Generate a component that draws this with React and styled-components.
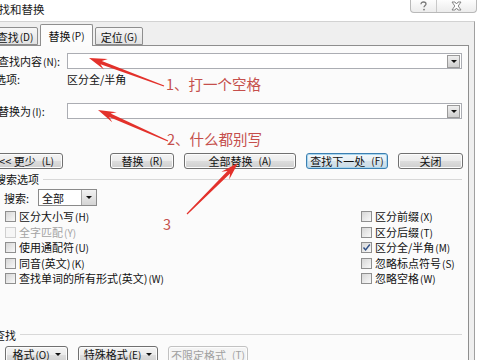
import React from "react";
import styled, { createGlobalStyle } from "styled-components";

const GlobalStyle = createGlobalStyle`
  * { box-sizing: border-box; }
  body { margin: 0; background: #fff; }
`;

const Screen = styled.div`
  position: relative;
  width: 480px;
  height: 360px;
  overflow: hidden;
  background: #fff;
  font-family: "Noto Sans CJK SC", "Noto Sans", sans-serif;
  font-size: 11px;
  line-height: 14px;
  color: #111;
  display: flex;
  flex-direction: column;
`;

const TitleBar = styled.div`
  height: 21px;
  flex-shrink: 0;
  display: flex;
  justify-content: space-between;
  align-items: flex-start;
`;

const Title = styled.div`
  margin-left: -13px;
  margin-top: 2px;
  font-size: 11.5px;
  color: #222;
`;

const CaptionGroup = styled.div`
  display: flex;
  margin-right: 3px;
  height: 13px;
  border: 1px solid #b9b9b9;
  border-top: none;
  border-radius: 0 0 4px 4px;
  background: linear-gradient(#fdfdfd, #ececec);
`;

const CaptionButton = styled.div`
  width: ${p => p.$w}px;
  display: flex;
  align-items: center;
  justify-content: center;
  & + & {
    border-left: 1px solid #c9c9c9;
  }
`;

const Dialog = styled.div`
  flex: 1;
  margin-left: -12px;
  width: 487px;
  background: #efefef;
  border-top: 1px solid #d2d2d2;
  border-right: 1px solid #a0a0a0;
  display: flex;
  flex-direction: column;
  min-height: 0;
`;

const TabStrip = styled.div`
  height: 23px;
  flex-shrink: 0;
  display: flex;
  align-items: flex-end;
  padding-left: 4px;
  gap: 2px;
`;

const Tab = styled.div`
  width: ${p => p.$w}px;
  height: ${p => (p.$active ? 22 : 18)}px;
  margin-bottom: ${p => (p.$active ? -1 : 0)}px;
  border: 1px solid #8e8e8e;
  border-bottom: ${p => (p.$active ? "none" : "1px solid #8e8e8e")};
  border-radius: 2px 2px 0 0;
  background: ${p =>
    p.$active ? "#fcfcfc" : "linear-gradient(#f7f7f7, #e2e2e2)"};
  display: flex;
  align-items: center;
  justify-content: center;
  padding-top: ${p => (p.$active ? 0 : 1)}px;
  position: relative;
  z-index: ${p => (p.$active ? 1 : 0)};
`;

const Panel = styled.div`
  flex: 1;
  margin-right: 5px;
  background: #fbfbfb;
  border-top: 1px solid #8e8e8e;
  border-right: 1px solid #8e8e8e;
  padding: 7px 6px 0 10px;
  display: flex;
  flex-direction: column;
`;

const FieldRow = styled.div`
  display: flex;
  align-items: center;
  margin-top: ${p => p.$mt || 0}px;
  min-height: 16px;
`;

const FieldLabel = styled.div`
  width: 69px;
  flex-shrink: 0;
  margin-left: ${p => p.$ml || 0}px;
`;

const FieldValue = styled.span`
  margin-left: 3px;
`;

const ComboBox = styled.div`
  flex: 1;
  height: 16px;
  border: 1px solid #abadb3;
  background: #fff;
  display: flex;
  justify-content: flex-end;
  align-items: center;
  padding-right: 1px;
`;

const DropButton = styled.div`
  width: 13px;
  height: 13px;
  border: 1px solid #9a9a9a;
  background: linear-gradient(#efefef, #cfcfcf);
  display: flex;
  align-items: center;
  justify-content: center;
`;

const Caret = styled.span`
  width: 0;
  height: 0;
  border-left: 3px solid transparent;
  border-right: 3px solid transparent;
  border-top: 3px solid #111;
`;

const ButtonRow = styled.div`
  display: flex;
  margin-top: ${p => p.$mt || 0}px;
`;

const Button = styled.div`
  width: ${p => p.$w}px;
  height: ${p => p.$h || 16}px;
  margin-left: ${p => p.$ml || 0}px;
  flex-shrink: 0;
  border: 1px solid ${p => (p.$focus ? "#3c7fb1" : p.$disabled ? "#c2c2c2" : "#707070")};
  border-radius: 3px;
  background: ${p =>
    p.$disabled
      ? "#f4f4f4"
      : p.$focus
      ? "linear-gradient(#f3f8fb 0%, #e6eff5 50%, #d6e3ec 51%, #cbdbe6 100%)"
      : "linear-gradient(#f4f4f4 0%, #ebebeb 50%, #dddddd 51%, #cfcfcf 100%)"};
  box-shadow: ${p => (p.$focus ? "inset 0 0 0 1px #a9d6ee" : "inset 0 0 0 1px #fcfcfc")};
  color: ${p => (p.$disabled ? "#a0a0a0" : "#111")};
  display: flex;
  align-items: center;
  justify-content: center;
  gap: 5px;
  white-space: nowrap;
`;

const SectionHeader = styled.div`
  display: flex;
  align-items: center;
  height: 14px;
  margin-top: ${p => p.$mt || 0}px;
  margin-left: ${p => p.$ml || 0}px;
`;

const SectionRule = styled.div`
  flex: 1;
  margin-left: 4px;
  border-top: 1px solid #d8d8d8;
`;

const SearchLabel = styled.div`
  width: 34px;
  margin-left: 6px;
`;

const Select = styled.div`
  width: 59px;
  height: 17px;
  border: 1px solid #8a8a8a;
  background: #fff;
  display: flex;
  align-items: center;
  justify-content: space-between;
  padding-left: 3px;
`;

const SelectArrow = styled.div`
  width: 15px;
  height: 100%;
  border-left: 1px solid #a5a5a5;
  background: linear-gradient(#f2f2f2, #d4d4d4);
  display: flex;
  align-items: center;
  justify-content: center;
`;

const OptionsGrid = styled.div`
  display: grid;
  grid-template-columns: 356px 1fr;
  padding-left: 7px;
  margin-top: 3px;
`;

const OptionColumn = styled.div`
  display: flex;
  flex-direction: column;
`;

const CheckRow = styled.div`
  height: 15.5px;
  display: flex;
  align-items: center;
  gap: 3px;
  color: ${p => (p.$disabled ? "#a3a3a3" : "#111")};
  white-space: nowrap;
`;

const CheckBox = styled.span`
  width: 11px;
  height: 11px;
  flex-shrink: 0;
  border: 1px solid ${p => (p.$disabled ? "#cfcfcf" : "#8f8f8f")};
  background: ${p =>
    p.$disabled ? "#f6f6f6" : "linear-gradient(135deg, #d6d6d6, #f9f9f9)"};
  display: flex;
  align-items: center;
  justify-content: center;
`;

const Key = styled.span`
  font-size: 10px;
  margin-left: 1px;
`;

const Overlay = styled.svg`
  position: absolute;
  left: 0;
  top: 0;
  pointer-events: none;
`;

const Note = styled.div`
  position: absolute;
  left: ${p => p.$x}px;
  top: ${p => p.$y}px;
  font-size: 14.5px;
  line-height: 16px;
  color: #c54f4c;
  white-space: nowrap;
`;

const K = ({ children }) => <Key>({children})</Key>;

const arrowPoints = (x1, y1, x2, y2) => {
  const dx = x2 - x1;
  const dy = y2 - y1;
  const len = Math.hypot(dx, dy);
  const ux = dx / len;
  const uy = dy / len;
  const nx = -uy;
  const ny = ux;
  const p = (d, w) =>
    `${(x2 - ux * d + nx * w).toFixed(1)},${(y2 - uy * d + ny * w).toFixed(1)}`;
  return [p(len, 0.6), p(13, 1.8), p(18, 5.5), p(0, 0), p(18, -5.5), p(13, -1.8), p(len, -0.6)].join(" ");
};

const ARROWS = [
  [164, 86, 89, 58],
  [168, 141, 98, 110],
  [187, 214, 238, 163]
];

const LEFT_OPTIONS = [
  { label: "区分大小写", key: "H" },
  { label: "全字匹配", key: "Y", disabled: true },
  { label: "使用通配符", key: "U" },
  { label: "同音(英文)", key: "K" },
  { label: "查找单词的所有形式(英文)", key: "W" }
];

const RIGHT_OPTIONS = [
  { label: "区分前缀", key: "X" },
  { label: "区分后缀", key: "T" },
  { label: "区分全/半角", key: "M", checked: true },
  { label: "忽略标点符号", key: "S" },
  { label: "忽略空格", key: "W" }
];

const HelpIcon = () => (
  <svg width="9" height="10" viewBox="0 0 9 10">
    <path
      d="M2 3.2 C2 1.5 3.2 1 4.5 1 C6 1 7 1.8 7 3 C7 4.4 5 4.6 5 6.3"
      fill="none"
      stroke="#7a7a7a"
      strokeWidth="1.3"
    />
    <circle cx="5" cy="8.6" r="0.9" fill="#7a7a7a" />
  </svg>
);

const CloseIcon = () => (
  <svg width="11" height="10" viewBox="0 0 11 10">
    <path
      d="M1 1 L4 1 L5.5 3 L7 1 L10 1 L7.2 5 L10 9 L7 9 L5.5 7 L4 9 L1 9 L3.8 5 Z"
      fill="#fff"
      stroke="#7c7c7c"
      strokeWidth="0.9"
    />
  </svg>
);

const CheckMark = () => (
  <svg width="9" height="9" viewBox="0 0 9 9">
    <path d="M1.5 4.5 L3.6 7 L7.8 1.5" fill="none" stroke="#2f4f86" strokeWidth="1.4" />
  </svg>
);

const Option = ({ label, k, disabled, checked }) => (
  <CheckRow $disabled={disabled}>
    <CheckBox $disabled={disabled}>{checked && <CheckMark />}</CheckBox>
    <span>
      {label}
      <K>{k}</K>
    </span>
  </CheckRow>
);

export default function App() {
  return (
    <Screen>
      <GlobalStyle />
      <TitleBar>
        <Title>查找和替换</Title>
        <CaptionGroup>
          <CaptionButton $w={25}>
            <HelpIcon />
          </CaptionButton>
          <CaptionButton $w={40}>
            <CloseIcon />
          </CaptionButton>
        </CaptionGroup>
      </TitleBar>

      <Dialog>
        <TabStrip>
          <Tab $w={46}>
            查找<K>D</K>
          </Tab>
          <Tab $w={53} $active>
            替换<K>P</K>
          </Tab>
          <Tab $w={48}>
            定位<K>G</K>
          </Tab>
        </TabStrip>

        <Panel>
          <FieldRow>
            <FieldLabel>
              查找内容<K>N</K>:
            </FieldLabel>
            <ComboBox>
              <DropButton>
                <Caret />
              </DropButton>
            </ComboBox>
          </FieldRow>
          <FieldRow $mt={2}>
            <FieldLabel $ml={-3}>选项:</FieldLabel>
            <FieldValue>区分全/半角</FieldValue>
          </FieldRow>
          <FieldRow $mt={16}>
            <FieldLabel>
              替换为<K>I</K>:
            </FieldLabel>
            <ComboBox>
              <DropButton>
                <Caret />
              </DropButton>
            </ComboBox>
          </FieldRow>

          <ButtonRow $mt={34}>
            <Button $w={73} $ml={-8}>
              &lt;&lt; 更少<K>L</K>
            </Button>
            <Button $w={64} $ml={47}>
              替换<K>R</K>
            </Button>
            <Button $w={112} $ml={10}>
              全部替换<K>A</K>
            </Button>
            <Button $w={82} $ml={10} $focus>
              查找下一处<K>F</K>
            </Button>
            <Button $w={65} $ml={10}>
              关闭
            </Button>
          </ButtonRow>

          <SectionHeader $mt={3} $ml={-3}>
            搜索选项
            <SectionRule />
          </SectionHeader>

          <FieldRow $mt={3}>
            <SearchLabel>搜索:</SearchLabel>
            <Select>
              全部
              <SelectArrow>
                <Caret />
              </SelectArrow>
            </Select>
          </FieldRow>

          <OptionsGrid>
            <OptionColumn>
              {LEFT_OPTIONS.map(o => (
                <Option key={o.label} label={o.label} k={o.key} disabled={o.disabled} />
              ))}
            </OptionColumn>
            <OptionColumn>
              {RIGHT_OPTIONS.map(o => (
                <Option key={o.label} label={o.label} k={o.key} checked={o.checked} />
              ))}
            </OptionColumn>
          </OptionsGrid>

          <SectionHeader $mt={41} $ml={-4}>
            查找
            <SectionRule />
          </SectionHeader>

          <ButtonRow $mt={4}>
            <Button $w={63} $h={18} $ml={7}>
              <span>
                格式<K>O</K>
              </span>
              <Caret />
            </Button>
            <Button $w={80} $h={18} $ml={10}>
              <span>
                特殊格式<K>E</K>
              </span>
              <Caret />
            </Button>
            <Button $w={80} $h={18} $ml={10} $disabled>
              不限定格式<K>T</K>
            </Button>
          </ButtonRow>
        </Panel>
      </Dialog>

      <Overlay width="480" height="360" viewBox="0 0 480 360">
        {ARROWS.map((a, i) => (
          <polygon key={i} points={arrowPoints(...a)} fill="#e3312b" />
        ))}
      </Overlay>
      <Note $x={166} $y={76}>1、打一个空格</Note>
      <Note $x={167} $y={131}>2、什么都别写</Note>
      <Note $x={163} $y={216}>3</Note>
    </Screen>
  );
}
